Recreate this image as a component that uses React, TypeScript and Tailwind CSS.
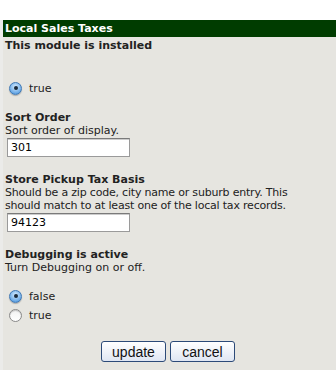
import React from 'react';

const Radio = ({ checked }: { checked: boolean }) =>
  checked ? (
    <span className="inline-flex items-center justify-center w-[13px] h-[13px] rounded-full border border-[#3f78b5] bg-[radial-gradient(circle_at_50%_35%,#d6ecff,#6aa9e6_70%,#3d7fc4)] shadow-[0_1px_1px_rgba(0,0,0,0.25)]">
      <span className="w-[4px] h-[4px] rounded-full bg-[#1a2a3a]" />
    </span>
  ) : (
    <span className="inline-block w-[13px] h-[13px] rounded-full border border-[#8a8a8a] bg-[linear-gradient(#f2f2f2,#ffffff)] shadow-[inset_0_1px_1px_rgba(0,0,0,0.2)]" />
  );

const TextBox = ({ value }: { value: string }) => (
  <div className="ml-[2px] w-[123px] h-[19px] border border-[#9a9a9a] border-t-[#7a7a7a] bg-white px-[3px] text-[11px] leading-[17px] text-black shadow-[inset_0_1px_0_#ccc]">
    {value}
  </div>
);

const Button = ({ label }: { label: string }) => (
  <button className="h-[21px] w-full rounded-[3px] border border-[#2c4a78] bg-[linear-gradient(#ffffff,#dfe6f3)] text-[14px] leading-[18px] text-[#111] font-['Liberation_Sans',Arial,sans-serif]">
    {label}
  </button>
);

export default function App() {
  return (
    <div className="w-[336px] h-[370px] bg-white font-['DejaVu_Sans',Verdana,sans-serif] text-[11px] leading-[13px] text-[#222] overflow-hidden">
      <div className="h-[20px]" />
      <div className="flex h-[350px]">
        <div className="w-[3px] bg-[#ebebe9]" />
        <div className="flex-1 bg-[#e6e5e0]">
          <div className="h-[17px] bg-[#003c00] text-white font-bold px-[2px] leading-[17px]">
            Local Sales Taxes
          </div>
          <div className="pl-[2px] pt-[2px]">
            <div className="font-bold">This module is installed</div>
            <div className="h-[29px]" />
            <label className="flex items-center gap-[7px] h-[14px] pl-[4px]">
              <Radio checked />
              <span>true</span>
            </label>

            <div className="mt-[16px] font-bold">Sort Order</div>
            <div>Sort order of display.</div>
            <div className="mt-[1px]">
              <TextBox value="301" />
            </div>

            <div className="mt-[16px] font-bold">Store Pickup Tax Basis</div>
            <div className="whitespace-nowrap tracking-[-0.2px]">
              Should be a zip code, city name or suburb entry. This
              <br />
              should match to at least one of the local tax records.
            </div>
            <div className="mt-[1px]">
              <TextBox value="94123" />
            </div>

            <div className="mt-[16px] font-bold">Debugging is active</div>
            <div>Turn Debugging on or off.</div>
            <div className="mt-[15px] flex flex-col gap-[5px] pl-[4px]">
              <label className="flex items-center gap-[7px] h-[14px]">
                <Radio checked />
                <span>false</span>
              </label>
              <label className="flex items-center gap-[7px] h-[14px]">
                <Radio checked={false} />
                <span>true</span>
              </label>
            </div>

            <div className="mt-[19px] flex justify-center gap-[4px] pr-[5px]">
              <div className="w-[65px]"><Button label="update" /></div>
              <div className="w-[65px]"><Button label="cancel" /></div>
            </div>
          </div>
        </div>
      </div>
    </div>
  );
}
